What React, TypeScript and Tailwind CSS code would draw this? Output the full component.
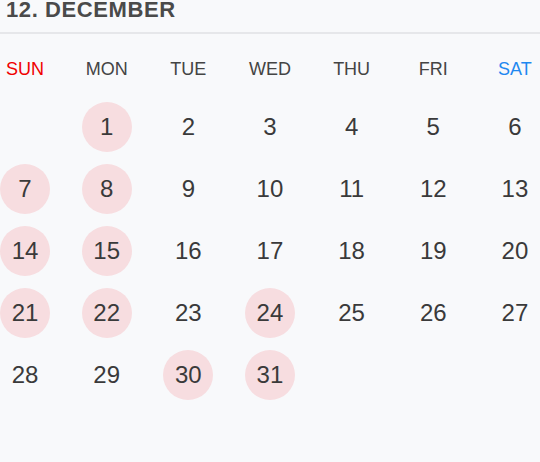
const WEEKDAYS = [
  { label: 'SUN', color: 'text-[#f00000]' },
  { label: 'MON', color: 'text-[#444444]' },
  { label: 'TUE', color: 'text-[#444444]' },
  { label: 'WED', color: 'text-[#444444]' },
  { label: 'THU', color: 'text-[#444444]' },
  { label: 'FRI', color: 'text-[#444444]' },
  { label: 'SAT', color: 'text-[#1e88f0]' },
];

// December starts on a Monday
const FIRST_OFFSET = 1;
const DAYS_IN_MONTH = 31;
const MARKED = new Set([1, 7, 8, 14, 15, 21, 22, 24, 30, 31]);

export default function App() {
  const cells: (number | null)[] = [];
  for (let i = 0; i < FIRST_OFFSET; i++) cells.push(null);
  for (let d = 1; d <= DAYS_IN_MONTH; d++) cells.push(d);

  return (
    <div className="w-[540px] h-[462px] overflow-hidden bg-[#f8f9fb] font-['Liberation_Sans',Arial,sans-serif]">
      <h1 className="pl-[6px] text-[22px] leading-[20px] font-bold text-[#4a4a4a] tracking-[0.6px]">
        12. DECEMBER
      </h1>
      <div className="mt-[12px] h-[2px] bg-[#e6e7ea]" />

      <div className="pt-[10px] grid grid-cols-[repeat(7,50px)] justify-between">
        {WEEKDAYS.map(({ label, color }) => (
          <div key={label} className={`h-[50px] flex items-center justify-center text-[18px] ${color}`}>
            {label}
          </div>
        ))}
      </div>

      <div className="mt-[8px] grid grid-cols-[repeat(7,50px)] justify-between gap-y-[12px]">
        {cells.map((d, i) =>
          d === null ? (
            <div key={`e${i}`} className="h-[50px]" />
          ) : (
            <div
              key={d}
              className={`h-[50px] w-[50px] rounded-full flex items-center justify-center text-[24px] text-[#3a3a3a] ${
                MARKED.has(d) ? 'bg-[#f7dde0]' : ''
              }`}
            >
              {d}
            </div>
          )
        )}
      </div>
    </div>
  );
}
